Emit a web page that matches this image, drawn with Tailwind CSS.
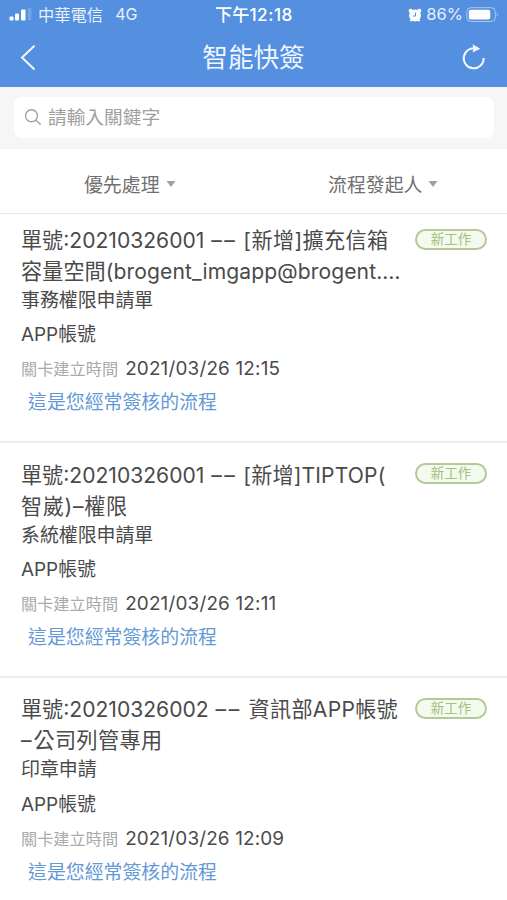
<!DOCTYPE html>
<html lang="zh-Hant">
<head>
<meta charset="utf-8">
<title>智能快簽</title>
<script src="https://cdn.jsdelivr.net/npm/@tailwindcss/browser@4"></script>
</head>
<body class="bg-white">
<div class="flex h-[900px] w-[507px] flex-col overflow-hidden bg-white font-['Inter','Noto_Sans_CJK_TC',sans-serif] text-[#4a4a4a]">
  <header class="h-[87px] shrink-0 bg-[#548fe0] text-white">
    <div class="grid h-[29px] grid-cols-3 items-center pr-[8px] pl-[9px] text-[16px] leading-none text-[#e8f1fd]">
      <div class="flex items-center">
        <svg class="h-[14px] w-[23px]" viewBox="0 0 23 14"><g fill="#fff"><rect x=".5" y="9.500" width="4" height="4" rx="1"/><rect x="6" y="6.500" width="4" height="7" rx="1"/><rect x="12" y="2.500" width="4.500" height="11" rx="1"/><rect x="18.800" y="1" width="3.600" height="12.500" rx="1" opacity=".2"/></g></svg>
        <span class="ml-[6px] pt-[1px] text-[16.300px] whitespace-nowrap">中華電信</span>
        <span class="ml-[12px] text-[16px]">4G</span>
      </div>
      <div class="text-center text-[17.200px] font-medium whitespace-nowrap text-white">下午<span class="tracking-[0.5px]">12:18</span></div>
      <div class="flex items-center justify-end">
        <svg class="h-[14px] w-[14px]" viewBox="0 0 14 14"><g fill="#fff"><circle cx="7" cy="7.500" r="5.900"/><circle cx="2.700" cy="2.800" r="2.100"/><circle cx="11.300" cy="2.800" r="2.100"/><path d="M1.500 13l2-2.500 1.500 1.500-1.500 1.500zM12.500 13l-2-2.500L9 12l1.500 1.500z"/></g><path d="M7.500 4.500V8H5" fill="none" stroke="#548fe0" stroke-width="1"/></svg>
        <span class="ml-[4px] text-[16.500px]">86%</span>
        <svg class="ml-[3px] h-[16px] w-[33px]" viewBox="0 0 33 16"><rect x=".8" y=".7" width="28.500" height="13.800" rx="4" fill="none" stroke="#fff" stroke-opacity=".5"/><rect x="2.800" y="2.700" width="21.500" height="9.800" rx="2" fill="#fff"/><path d="M30.800 5q2 2.500 0 5z" fill="#fff" opacity=".5"/></svg>
      </div>
    </div>
    <div class="grid h-[58px] grid-cols-[60px_1fr_60px] items-center">
      <svg class="ml-[20px] h-[28px] w-[16px]" viewBox="0 0 16 28" fill="none" stroke="#f2f8ff" stroke-width="2"><path d="M14.500 1.800L2 13.500l12.500 12"/></svg>
      <h1 class="text-center text-[25.600px] leading-none text-[#eff6ff]">智能快簽</h1>
      <svg class="ml-[14px] h-[28px] w-[26px]" viewBox="0 0 26 28"><path d="M15 4.500A10 10 0 1 0 22.700 14" fill="none" stroke="#f2f8ff" stroke-width="2"/><path d="M11.500.3l7.800 4.500-7.800 3.700 1-3.700z" fill="#f2f8ff"/></svg>
    </div>
  </header>

  <div class="h-[62px] shrink-0 bg-[#f6f6f7] pt-[10px] pr-[13px] pl-[14px]">
    <div class="flex h-[41px] items-center rounded-[8px] bg-white pl-[10px] text-[18.700px] leading-none text-[#a0a0a0]">
      <svg class="-mt-[1px] h-[18px] w-[18px]" viewBox="0 0 18 18" fill="none" stroke="#a0a0a0" stroke-width="1.400"><circle cx="7.500" cy="7.800" r="6"/><path d="M12 12.200l4.700 4.500"/></svg>
      <span class="ml-[6px] pt-[1px]">請輸入關鍵字</span>
    </div>
  </div>

  <div class="grid h-[65px] shrink-0 grid-cols-2 border-b border-[#e8e8e8] text-[18.900px] leading-none text-[#707070]">
    <div class="flex items-center justify-center gap-[6px] pt-[6px] pl-[6px]"><span class="pt-[4px]">優先處理</span><svg class="h-[6px] w-[10px]" viewBox="0 0 10 6"><path d="M.5 0h9L5 6z" fill="#a0a0a0"/></svg></div>
    <div class="flex items-center justify-center gap-[6px] pt-[6px] pl-[6px]"><span class="pt-[4px]">流程發起人</span><svg class="h-[6px] w-[10px]" viewBox="0 0 10 6"><path d="M.5 0h9L5 6z" fill="#a0a0a0"/></svg></div>
  </div>

  <main class="whitespace-nowrap">
    <article class="flex h-[229px] items-start border-b-2 border-[#ededed] pt-[11px] pl-[21px]">
      <div class="w-[394px] shrink-0">
        <h2 class="text-[21.100px] leading-[31px]"><span class="block">單號:20210326001 <span class="ml-[1px] tracking-[2.500px]">––</span> <span class="tracking-[0.400px]">[新增]擴充信箱</span></span><span class="block tracking-[0.100px]">容量空間(brogent_imgapp@brogent.…</span></h2>
        <p class="text-[18.900px] leading-[28px]">事務權限申請單</p>
        <p class="mt-[3px] text-[18.900px] leading-[34px]">APP帳號</p>
        <p class="flex h-[34px] items-center"><span class="text-[16.200px] text-[#aaa]">關卡建立時間</span><span class="ml-[7px] text-[18.900px] tracking-[0.180px]">2021/03/26 12:15</span></p>
        <p class="pl-[7px] text-[18.900px] leading-[34px] text-[#6398d6]">這是您經常簽核的流程</p>
      </div>
      <span class="mt-[4px] flex h-[21px] w-[72px] items-center justify-center rounded-full border-2 border-[#b3c998] bg-[#f5faef] text-[13.500px] leading-none text-[#a5c07f]">新工作</span>
    </article>
    <article class="flex h-[235px] items-start border-b-2 border-[#ededed] pt-[17px] pl-[21px]">
      <div class="w-[394px] shrink-0">
        <h2 class="text-[21.100px] leading-[31px]"><span class="block">單號:20210326001 <span class="ml-[1px] tracking-[2.500px]">––</span> <span class="tracking-[0.150px]">[新增]TIPTOP(</span></span><span class="block tracking-[0.700px]">智崴)–權限</span></h2>
        <p class="text-[18.900px] leading-[28px]">系統權限申請單</p>
        <p class="mt-[3px] text-[18.900px] leading-[34px]">APP帳號</p>
        <p class="flex h-[34px] items-center"><span class="text-[16.200px] text-[#aaa]">關卡建立時間</span><span class="ml-[7px] text-[18.900px] tracking-[0.180px]">2021/03/26 12:11</span></p>
        <p class="pl-[7px] text-[18.900px] leading-[34px] text-[#6398d6]">這是您經常簽核的流程</p>
      </div>
      <span class="mt-[3px] flex h-[21px] w-[72px] items-center justify-center rounded-full border-2 border-[#b3c998] bg-[#f5faef] text-[13.500px] leading-none text-[#a5c07f]">新工作</span>
    </article>
    <article class="flex h-[235px] items-start pt-[16px] pl-[21px]">
      <div class="w-[394px] shrink-0">
        <h2 class="text-[21.100px] leading-[31px]"><span class="block">單號:20210326002 <span class="ml-[1px] tracking-[2.500px]">––</span> <span class="ml-[1px] tracking-[0.300px]">資訊部APP帳號</span></span><span class="block"><span class="mr-[2px]">–</span><span class="tracking-[0.400px]">公司列管專用</span></span></h2>
        <p class="text-[18.900px] leading-[28px]">印章申請</p>
        <p class="mt-[4px] text-[18.900px] leading-[34px]">APP帳號</p>
        <p class="flex h-[34px] items-center"><span class="text-[16.200px] text-[#aaa]">關卡建立時間</span><span class="ml-[7px] text-[18.900px] tracking-[0.150px]">2021/03/26 12:09</span></p>
        <p class="pl-[7px] text-[18.900px] leading-[34px] text-[#6398d6]">這是您經常簽核的流程</p>
      </div>
      <span class="mt-[4px] flex h-[21px] w-[72px] items-center justify-center rounded-full border-2 border-[#b3c998] bg-[#f5faef] text-[13.500px] leading-none text-[#a5c07f]">新工作</span>
    </article>
  </main>
</div>
</body>
</html>
